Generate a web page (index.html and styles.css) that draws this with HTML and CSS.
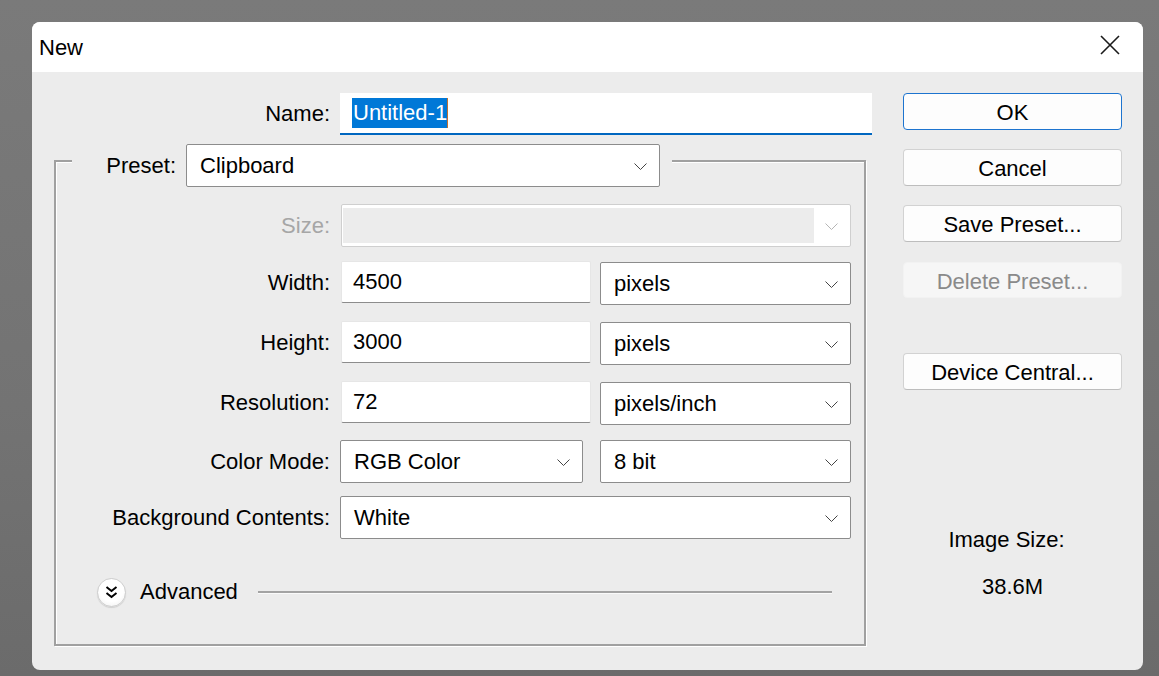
FILE: index.html
```html
<!DOCTYPE html>
<html>
<head>
<meta charset="utf-8">
<link rel="stylesheet" href="styles.css">
</head>
<body>
<div class="dialog">
  <div class="titlebar">
    <span class="title">New</span>
    <svg class="close" width="20" height="20" viewBox="0 0 20 20"><path d="M1 1L19 19M19 1L1 19" stroke="#1a1a1a" stroke-width="1.6" fill="none"/></svg>
  </div>
  <div class="content">
    <div class="main">
      <div class="name-row">
        <label class="lbl name-lbl">Name:</label>
        <div class="name-input"><span class="sel">Untitled-1</span></div>
      </div>
      <div class="group">
        <div class="preset-row">
          <label class="lbl preset-lbl">Preset:</label>
          <div class="select preset-sel"><span>Clipboard</span><svg class="chev" width="13" height="7" viewBox="0 0 13 7"><path d="M0.5 0.5L6.5 6.5L12.5 0.5" stroke="#444" fill="none"/></svg></div>
        </div>
        <div class="row size-row">
          <label class="lbl disabled">Size:</label>
          <div class="select disabled-sel"><div class="fill"></div><svg class="chev" width="13" height="7" viewBox="0 0 13 7"><path d="M0.5 0.5L6.5 6.5L12.5 0.5" stroke="#b5b5b5" fill="none"/></svg></div>
        </div>
        <div class="row num-row r-width">
          <label class="lbl">Width:</label>
          <div class="input">4500</div>
          <div class="select unit"><span>pixels</span><svg class="chev" width="13" height="7" viewBox="0 0 13 7"><path d="M0.5 0.5L6.5 6.5L12.5 0.5" stroke="#444" fill="none"/></svg></div>
        </div>
        <div class="row num-row r-next">
          <label class="lbl">Height:</label>
          <div class="input">3000</div>
          <div class="select unit"><span>pixels</span><svg class="chev" width="13" height="7" viewBox="0 0 13 7"><path d="M0.5 0.5L6.5 6.5L12.5 0.5" stroke="#444" fill="none"/></svg></div>
        </div>
        <div class="row num-row r-next">
          <label class="lbl">Resolution:</label>
          <div class="input">72</div>
          <div class="select unit"><span>pixels/inch</span><svg class="chev" width="13" height="7" viewBox="0 0 13 7"><path d="M0.5 0.5L6.5 6.5L12.5 0.5" stroke="#444" fill="none"/></svg></div>
        </div>
        <div class="row mode-row">
          <label class="lbl">Color Mode:</label>
          <div class="select mode"><span>RGB Color</span><svg class="chev" width="13" height="7" viewBox="0 0 13 7"><path d="M0.5 0.5L6.5 6.5L12.5 0.5" stroke="#444" fill="none"/></svg></div>
          <div class="select bits"><span>8 bit</span><svg class="chev" width="13" height="7" viewBox="0 0 13 7"><path d="M0.5 0.5L6.5 6.5L12.5 0.5" stroke="#444" fill="none"/></svg></div>
        </div>
        <div class="row bg-row">
          <label class="lbl">Background Contents:</label>
          <div class="select bgsel"><span>White</span><svg class="chev" width="13" height="7" viewBox="0 0 13 7"><path d="M0.5 0.5L6.5 6.5L12.5 0.5" stroke="#444" fill="none"/></svg></div>
        </div>
        <div class="adv-row">
          <div class="adv-btn"><svg width="29" height="29" viewBox="0 0 29 29"><path d="M9.5 9L14.5 13L19.5 9M9.5 15L14.5 19L19.5 15" stroke="#000" stroke-width="2" fill="none"/></svg></div>
          <span class="adv-text">Advanced</span>
          <div class="adv-line"></div>
        </div>
      </div>
    </div>
    <div class="side">
      <div class="btn default b-ok">OK</div>
      <div class="btn b-gap">Cancel</div>
      <div class="btn b-gap">Save Preset...</div>
      <div class="btn disabled-btn b-del">Delete Preset...</div>
      <div class="btn b-dev">Device Central...</div>
      <div class="img-size">Image Size:</div>
      <div class="img-val">38.6M</div>
    </div>
  </div>
</div>
</body>
</html>
```
FILE: styles.css
```css
* { box-sizing: border-box; }
html, body { margin: 0; padding: 0; }
body {
  width: 1159px;
  height: 676px;
  overflow: hidden;
  background: linear-gradient(180deg, #7a7a7a 0%, #737373 60%, #6b6b6b 100%);
  font-family: "Liberation Sans", Arial, sans-serif;
  font-size: 22px;
  color: #000;
}
.dialog {
  margin: 22px 0 0 32px;
  width: 1111px;
  height: 648px;
  border-radius: 8px;
  overflow: hidden;
  background: #ececec;
}
.titlebar {
  height: 50px;
  background: #fff;
  display: flex;
  align-items: center;
  justify-content: space-between;
  padding: 0 23px 0 7px;
}
.title { font-size: 22px; margin-top: 2px; }
.close { display: block; margin-top: -4px; }
.content {
  display: flex;
  height: 598px;
}
.main { width: 871px; flex: none; }
.lbl {
  display: flex;
  align-items: center;
  justify-content: flex-end;
  white-space: nowrap;
}
.lbl.disabled { color: #a6a6a6; }
.name-row {
  display: flex;
  margin-top: 21px;
  height: 42px;
}
.name-lbl { width: 298px; margin-right: 10px; }
.name-input {
  width: 532px;
  height: 42px;
  background: #fff;
  border-bottom: 2px solid #0067c0;
  padding: 5px 0 0 12px;
}
.sel {
  display: inline-block;
  background: #0078d7;
  color: #fff;
  line-height: 30px;
  height: 30px;
  padding: 0 0 0 1px;
  border-right: 1px solid #c07030;
}
.group {
  margin: 25px 0 0 22px;
  width: 812px;
  height: 486px;
  border: 2px solid #a0a0a0;
  box-shadow: inset 1px 1px 0 #fff, 1px 1px 0 #fff;
}
.preset-row {
  display: flex;
  margin: -18px 0 0 16px;
  width: 600px;
  height: 43px;
  background: #ececec;
}
.preset-lbl { width: 104px; margin-right: 10px; }
.select {
  position: relative;
  height: 43px;
  background: #fff;
  border: 1px solid #8c8c8c;
  border-radius: 2px;
  display: flex;
  align-items: center;
  padding-left: 13px;
}
.select .chev {
  position: absolute;
  right: 12px;
  top: 18px;
}
.preset-sel { width: 474px; }
.row { display: flex; }
.row .lbl { width: 274px; margin-right: 11px; }
.size-row { margin-top: 17px; height: 43px; }
.disabled-sel {
  width: 510px;
  border-color: #cfcfcf;
  padding: 0;
}
.disabled-sel .fill {
  position: absolute;
  left: 1px;
  top: 3px;
  bottom: 3px;
  width: 471px;
  background: #ececec;
}
.num-row { height: 44px; }
.r-width { margin-top: 14px; }
.r-next { margin-top: 16px; }
.input {
  width: 250px;
  height: 42px;
  background: #fff;
  border: 1px solid #e6e6e6;
  border-bottom-color: #8c8c8c;
  border-radius: 2px;
  display: flex;
  align-items: center;
  padding-left: 11px;
}
.unit { width: 251px; margin: 1px 0 0 9px; }
.mode-row { margin-top: 15px; height: 43px; }
.mode-row .lbl, .bg-row .lbl { margin-right: 10px; }
.mode { width: 243px; }
.bits { width: 251px; margin-left: 17px; }
.bg-row { margin-top: 13px; height: 43px; }
.bgsel { width: 511px; }
.adv-row {
  display: flex;
  align-items: center;
  margin: 38px 32px 0 41px;
  height: 30px;
}
.adv-btn {
  width: 29px;
  height: 29px;
  border-radius: 50%;
  background: radial-gradient(circle at 50% 40%, #ffffff 55%, #ededed 100%);
  border: 1px solid #cdcdcd;
  box-shadow: 0 1px 1px rgba(0,0,0,0.12);
  display: flex;
  align-items: center;
  justify-content: center;
}
.adv-btn svg { display: block; margin: -1px; }
.adv-text { margin-left: 14px; }
.adv-line {
  flex: 1;
  margin-left: 20px;
  margin-top: 1px;
  height: 3px;
  border-top: 2px solid #a3a3a3;
  border-bottom: 1px solid #fafafa;
}
.side {
  width: 219px;
  flex: none;
  display: flex;
  flex-direction: column;
}
.btn {
  height: 37px;
  background: #fdfdfd;
  border: 1px solid #d2d2d2;
  border-bottom-color: #bdbdbd;
  border-radius: 4px;
  display: flex;
  align-items: center;
  justify-content: center;
  white-space: nowrap;
  padding-top: 3px;
}
.default { border: 1px solid #1d74cf; }
.b-ok { margin-top: 21px; }
.b-gap { margin-top: 19px; }
.b-del {
  margin-top: 20px;
  height: 36px;
  background: #f6f6f6;
  border-color: #f2f2f2;
  color: #8a8a8a;
}
.b-dev { margin-top: 55px; }
.img-size {
  margin-top: 137px;
  line-height: 26px;
  text-align: center;
  padding-right: 12px;
}
.img-val {
  margin-top: 21px;
  line-height: 26px;
  text-align: center;
}
```
